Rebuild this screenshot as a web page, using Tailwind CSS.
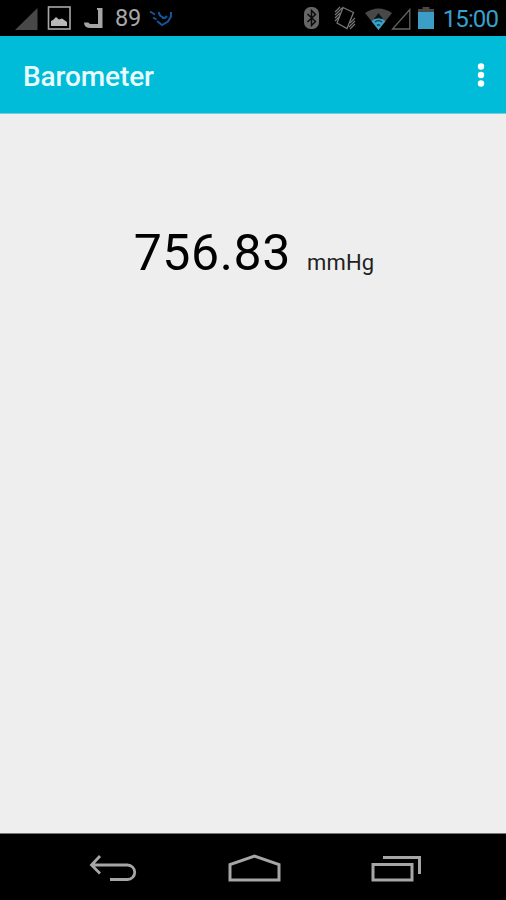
<!DOCTYPE html>
<html lang="en">
<head>
    <meta charset="UTF-8">
    <meta name="viewport" content="width=device-width, initial-scale=1.0">
    <title>Barometer</title>
    <script src="https://cdn.jsdelivr.net/npm/@tailwindcss/browser@4"></script>
</head>
<body class="flex flex-col w-[506px] h-[900px] overflow-hidden bg-[#eeeeee] font-['Roboto',sans-serif]">
    <!-- Status bar -->
    <div class="flex items-center justify-between h-9 shrink-0 bg-black pl-[15px] pr-2">
        <div class="flex items-center h-full">
            <svg class="w-[23px] h-[23px]" viewBox="0 0 23 23"><path d="M22.5 1v22H0z" fill="#484848"/></svg>
            <svg class="w-6 h-6 ml-[9px]" viewBox="0 0 24 24">
                <rect x="1.5" y="1" width="21.5" height="22" fill="none" stroke="#a8a8a8" stroke-width="1.6"/>
                <path d="M4 20v-5l2-1 3-3 3 2.5 3-1 5 3.500v4z" fill="#b8b8b8"/>
            </svg>
            <svg class="w-[19px] h-[21px] ml-[13px]" viewBox="0 0 19 21"><path d="M13 0h5.500V20H7Q0 20 0 14.500h4.500q.5 1.500 4 1.500H14V2h-1z" fill="#a5a5a5"/></svg>
            <span class="ml-[12px] mt-[2px] text-[23.500px] leading-none tracking-[-0.300px] text-[#a8a8a8]">89</span>
            <svg class="w-6 h-[18px] ml-[8px]" viewBox="0 0 24 18" fill="none" stroke="#12579c" stroke-width="2">
                <path d="M1 2.500l5 3M4 8.500l3.500 2M8 12l5 4 6-3.500 3-5V3M9.500 3l1.500 3.500 4 2.500M13 9h3l2-2"/>
            </svg>
        </div>
        <div class="flex items-center h-full">
            <svg class="w-[15px] h-[22px]" viewBox="0 0 15 22">
                <rect width="15" height="22" rx="6.500" fill="#666"/>
                <path d="M3.500 7l8 7.500-4 4V3.500l4 4-8 7.500" fill="none" stroke="#0a0a0a" stroke-width="1.500"/>
            </svg>
            <svg class="w-[22px] h-6 ml-[15px]" viewBox="0 0 22 24" fill="none" stroke="#777" stroke-width="1.300">
                <path d="M9 1.500L19.500 6.500 13 22.500 3 17z"/>
                <path d="M1 6l5-5M1 9l7-7M1 12l5-5M1 15l4-4M16 17l5-5M15 21l6-6M16 23l5-5" stroke-width="1.100"/>
            </svg>
            <svg class="w-[27px] h-[22px] ml-[9px] mt-px" viewBox="0 0 27 22">
                <path d="M0 5Q13.500-4 27 5L13.500 22z" fill="#484848"/>
                <path d="M13.500 5l4.500 6h-9z" fill="#111"/>
                <path d="M6.500 13Q13.500 7.500 20.500 13L13.500 22z" fill="#3b9fc6"/>
                <path d="M10 14q3.500-3 7 0M12 17.500q1.500-1.500 3 0" fill="none" stroke="#10485e" stroke-width="1.300"/>
            </svg>
            <svg class="w-5 h-[22px] -ml-px mt-px" viewBox="0 0 20 22"><path d="M18.800 1.500v19.500H1.500z" fill="none" stroke="#646464" stroke-width="1.300"/></svg>
            <svg class="w-4 h-[22px] ml-[7px]" viewBox="0 0 16 22">
                <path d="M4.500 0h7v3h-7z" fill="#484848"/>
                <path d="M0 2h16v3H0z" fill="#484848"/>
                <path d="M0 5h16v17H0z" fill="#3a9ec6"/>
            </svg>
            <span class="ml-[9px] mt-[2px] text-[24px] leading-none tracking-[-0.900px] text-[#379fcc]">15:00</span>
        </div>
    </div>

    <!-- App bar -->
    <header class="flex items-center justify-between h-[78px] shrink-0 bg-[#00bcd9] border-b border-[#70cddd] pl-[23px] pr-[21px]">
        <h1 class="text-[28px] leading-8 font-medium tracking-[-0.100px] text-[#e9fbff] mt-1">Barometer</h1>
        <svg class="w-2 h-6" viewBox="0 0 8 24" fill="#fff"><circle cx="4" cy="3.500" r="3.200"/><circle cx="4" cy="12" r="3.200"/><circle cx="4" cy="20.500" r="3.200"/></svg>
    </header>

    <!-- Pressure reading -->
    <main class="flex grow items-start justify-center pt-[109px] pl-[2px]">
        <p class="flex items-baseline text-black">
            <span class="text-[50px] leading-[60px] tracking-[0.600px]">756.83</span>
            <span class="ml-4 text-[22px] tracking-[0.200px] text-[#222]">mmHg</span>
        </p>
    </main>

    <!-- Navigation bar -->
    <nav class="flex items-center justify-between h-[67px] shrink-0 bg-black border-t border-[#777] pl-[89px] pr-[85px] pt-[2px]">
        <svg class="w-12 h-7" viewBox="0 0 48 28" fill="none" stroke="#a6a6a6" stroke-width="2.800">
            <path d="M11 2L2.500 11l8.500 8.500M3 11h35.500a7 7 0 0 1 0 14.500H21"/>
        </svg>
        <svg class="w-[53px] h-7" viewBox="0 0 53 28" fill="none" stroke="#a6a6a6" stroke-width="3"><path d="M2 26V10.500L26.500 2 51 10.500V26z"/></svg>
        <svg class="w-[50px] h-7" viewBox="0 0 50 28" fill="none" stroke="#a6a6a6" stroke-width="3">
            <path d="M2 10.500h39V26H2zM12 3.500h36.500V20"/>
        </svg>
    </nav>
</body>
</html>
